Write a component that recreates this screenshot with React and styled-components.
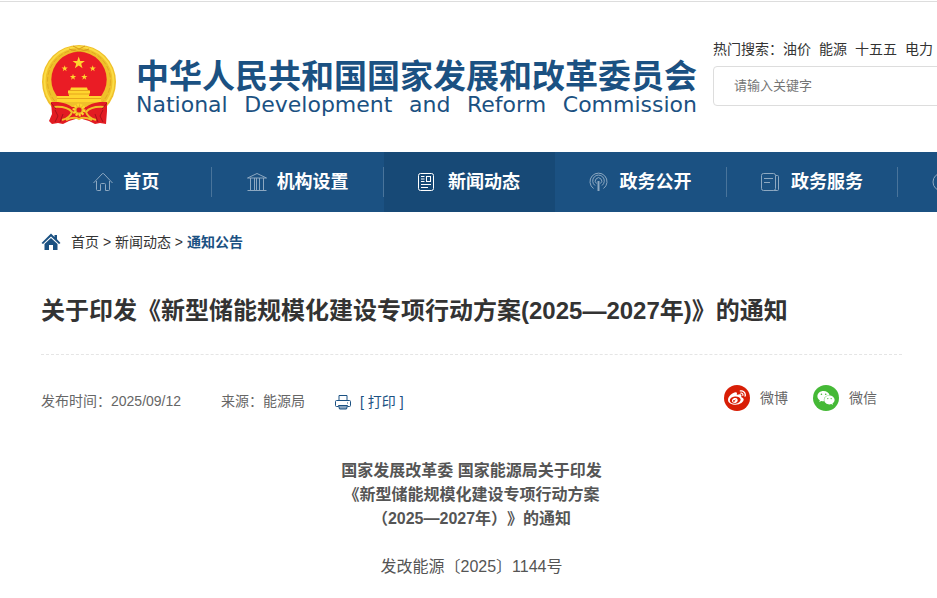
import styled, { createGlobalStyle } from 'styled-components';
import { FaWeibo, FaWeixin } from 'react-icons/fa';

const hotWords = ['油价', '能源', '十五五', '电力'];

const menu = [
  { label: '首页', icon: <HomeLine /> },
  { label: '机构设置', icon: <Institution /> },
  { label: '新闻动态', icon: <News />, active: true },
  { label: '政务公开', icon: <Broadcast /> },
  { label: '政务服务', icon: <Book /> },
];

export default function App() {
  return (
    <>
      <GlobalStyle />
      <Page>
        <Header>
          <Logo href="#">
            <Emblem />
            <div>
              <LogoTitle>中华人民共和国国家发展和改革委员会</LogoTitle>
              <LogoSubtitle>
                National Development and Reform Commission
              </LogoSubtitle>
            </div>
          </Logo>
          <Search>
            <HotWords>
              <span>热门搜索：</span>
              {hotWords.map((word) => (
                <a href="#" key={word}>
                  {word}
                </a>
              ))}
            </HotWords>
            <SearchInput
              type="text"
              placeholder="请输入关键字"
              aria-label="请输入关键字"
            />
          </Search>
        </Header>

        <Nav>
          <Menu>
            {menu.map((item) => (
              <MenuItem key={item.label} $active={item.active}>
                <MenuLink href="#">
                  {item.icon}
                  {item.label}
                </MenuLink>
              </MenuItem>
            ))}
            <MenuItem>
              <MenuLink href="#" $start>
                <Chat />
              </MenuLink>
            </MenuItem>
          </Menu>
        </Nav>

        <Main>
          <Breadcrumb>
            <HomeSolid />
            <div>
              <a href="#">首页</a> &gt; <a href="#">新闻动态</a> &gt;{' '}
              <Current href="#">通知公告</Current>
            </div>
          </Breadcrumb>

          <Title>
            关于印发《新型储能规模化建设专项行动方案(2025—2027年)》的通知
          </Title>

          <Meta>
            <MetaText>发布时间：2025/09/12</MetaText>
            <MetaText>来源：能源局</MetaText>
            <PrintButton type="button">
              <Printer />[ 打印 ]
            </PrintButton>
            <Share>
              <ShareLink href="#">
                <Round $color="#d81e06">
                  <FaWeibo size={18} />
                </Round>
                微博
              </ShareLink>
              <ShareLink href="#">
                <Round $color="#45b936">
                  <FaWeixin size={18} />
                </Round>
                微信
              </ShareLink>
            </Share>
          </Meta>

          <Article>
            <strong>
              国家发展改革委 国家能源局关于印发
              <br />
              《新型储能规模化建设专项行动方案
              <br />
              （2025—2027年）》的通知
            </strong>
            <p>发改能源〔2025〕1144号</p>
          </Article>
        </Main>
      </Page>
    </>
  );
}

function starPoints(cx, cy, r) {
  return Array.from({ length: 10 }, (_, i) => {
    const radius = i % 2 ? r * 0.4 : r;
    const angle = (Math.PI / 5) * i - Math.PI / 2;
    return `${cx + radius * Math.cos(angle)},${cy + radius * Math.sin(angle)}`;
  }).join(' ');
}

function Emblem() {
  return (
    <svg width="76" height="82" viewBox="0 0 76 82" aria-hidden="true">
      <circle cx="37" cy="37" r="37" fill="#f0c02a" />
      <circle
        cx="37"
        cy="36"
        r="31.5"
        fill="none"
        stroke="#dfab22"
        strokeWidth="1"
        strokeDasharray="5 2"
      />
      <circle
        cx="37"
        cy="36.5"
        r="34.5"
        fill="none"
        stroke="#fbdc45"
        strokeWidth="2"
      />
      <path d="M27 4l10 3 10-3M31 1l6 3 6-3" stroke="#d99b1c" fill="none" />
      <circle cx="37" cy="34.5" r="27.7" fill="#ea1c25" />
      <g fill="#ffd52e">
        <polygon points={starPoints(36.7, 18, 6.5)} />
        <polygon points={starPoints(22.7, 23.5, 3.3)} />
        <polygon points={starPoints(50.7, 23.5, 3.3)} />
        <polygon points={starPoints(31, 32, 3.3)} />
        <polygon points={starPoints(42.3, 32, 3.3)} />
        <path d="M29 42.5h16l1 3h2v3H26v-3h2z" />
        <path d="M27 48h20v3h12v6H15v-6h12z" />
      </g>
      <path d="M27 45.5h20M26 49h22M15 53.5h44" stroke="#e6a51c" />
      <path
        d="M9 57h9q12 0 19 7q7-7 19-7h9v9l-1 13-6-1-5 1-6-3-10-3-10 3-6 3-5-1-6 1-3-3 3-7z"
        fill="#e21b22"
      />
      <path d="M16 57h42q-9 1-14 5h-14q-5-4-14-5z" fill="#f0c02a" />
      <path
        d="M12 62q13-1 18 5q-2 6-10 8M62 62q-13-1-18 5q2 6 10 8"
        fill="none"
        stroke="#f0c02a"
        strokeWidth="2"
      />
      <path
        d="M13 65l3 6-3 6M61 65l-3 6 3 6M21 69l-3 8M53 69l3 8M9 58l5 6M65 58l-5 6"
        stroke="#a7131a"
        fill="none"
      />
      <circle
        cx="37"
        cy="65"
        r="5"
        fill="#e6b326"
        stroke="#ffd52e"
        strokeWidth="3"
        strokeDasharray="2 1"
      />
      <circle cx="37" cy="65" r="2.5" fill="#e21b22" />
      <path
        d="M24 75q8-4 13-1q5-3 13 1"
        fill="none"
        stroke="#f0c02a"
        strokeWidth="2"
      />
    </svg>
  );
}

function HomeLine() {
  return (
    <MenuIcon viewBox="0 0 20 20" aria-hidden="true">
      <path d="M.5 11 9.2 1.8q.8-.8 1.6 0L19.5 11M3.5 9v8.5q0 1 1 1h3v-6q0-1 1-1h3q1 0 1 1v6h3q1 0 1-1V9" />
    </MenuIcon>
  );
}

function Institution() {
  return (
    <MenuIcon viewBox="0 0 20 20" aria-hidden="true">
      <path d="M.5 6 10 1.5 19.5 6zM3.5 6v12M7.5 6v12M9.5 6v12M12.5 6v12M16.5 6v12M.5 18.5h19" />
    </MenuIcon>
  );
}

function News() {
  return (
    <MenuIcon viewBox="0 0 20 20" aria-hidden="true" $bright>
      <rect x=".5" y="1.5" width="15" height="17" rx="2" />
      <rect x="8.5" y="4.5" width="4" height="5" />
      <path d="M3 4.5h3.5M3 7h3.5M3 9.5h3.5M3 12.5h10M3 15.5h7" />
    </MenuIcon>
  );
}

function Broadcast() {
  return (
    <MenuIcon viewBox="0 0 20 20" aria-hidden="true">
      <path d="M4.5 16.5a8.5 8.5 0 1 1 10 0M6 13.5a5.8 5.8 0 1 1 7 0M7.5 11.5a3.2 3.2 0 1 1 4 0" />
      <path d="M9.5 9v10" strokeWidth="2" />
    </MenuIcon>
  );
}

function Book() {
  return (
    <MenuIcon viewBox="0 0 20 20" aria-hidden="true">
      <rect x=".5" y="1.5" width="14" height="17" rx="2" />
      <path d="M14.5 3.5h2q1 0 1 1v13q0 1-1 1h-4M3 6.5h9M3 10.5h6" />
    </MenuIcon>
  );
}

function Chat() {
  return (
    <MenuIcon viewBox="0 0 20 20" aria-hidden="true">
      <circle cx="10" cy="10" r="9" />
    </MenuIcon>
  );
}

function HomeSolid() {
  return (
    <svg width="20" height="18" viewBox="0 0 20 18" aria-hidden="true">
      <path
        d="M10 .5 13.5 4V2H16v4.2L19.5 10 18 11 10 3.5 2 11 .5 10z"
        fill="#1b5182"
      />
      <path d="M10 5l6.5 6v6H12v-5H8v5H3.5v-6z" fill="#1b5182" />
    </svg>
  );
}

function Printer() {
  return (
    <svg
      width="16"
      height="16"
      viewBox="0 0 16 16"
      fill="none"
      stroke="#1b5182"
      aria-hidden="true"
    >
      <path d="M4 6.5V1.5h8v5M3.5 12.5h-2q-1 0-1-1v-4q0-1 1-1h13q1 0 1 1v4q0 1-1 1h-2M12 9h1" />
      <path d="M3.5 11.5h9l-1 3.5h-7z" fill="#8aa5bf" />
    </svg>
  );
}

const GlobalStyle = createGlobalStyle`
  * {
    box-sizing: border-box;
  }
  body {
    margin: 0;
    background: #fff;
    color: #333;
    font: 14px/20px 'Liberation Sans', 'Noto Sans CJK SC', sans-serif;
  }
  a {
    color: inherit;
    text-decoration: none;
  }
  svg {
    flex: none;
  }
`;

const Page = styled.div`
  overflow: hidden;
  border-top: 1px solid #fff;
`;

const Header = styled.header`
  display: flex;
  gap: 16px;
  padding: 37px 0 25px 42px;
  border-top: 1px solid #ddd;
`;

const Logo = styled.a`
  display: flex;
  flex: none;
  gap: 18px;
  padding-top: 6px;
  color: #1b5182;
  white-space: nowrap;
`;

const LogoTitle = styled.div`
  padding-top: 15px;
  font-size: 33px;
  font-weight: 700;
  line-height: 34px;
`;

const LogoSubtitle = styled.div`
  font-family: 'DejaVu Sans', sans-serif;
  font-size: 22px;
  line-height: 22px;
  text-align-last: justify;
`;

const Search = styled.form`
  flex: 1 0 320px;
`;

const HotWords = styled.div`
  display: flex;
  gap: 8px;
  margin-bottom: 7px;

  span {
    margin-right: -8px;
  }
`;

const SearchInput = styled.input`
  width: 100%;
  height: 40px;
  padding: 0 20px 2px;
  border: 1px solid #ddd;
  border-radius: 4px;
  font: inherit;
  font-size: 13px;

  &::placeholder {
    color: #757575;
  }
`;

const Nav = styled.nav`
  padding-left: 41px;
  background: #1b5182;
`;

const Menu = styled.ul`
  display: grid;
  grid-template-columns: repeat(7, 1fr);
  min-width: 1200px;
  margin: 0;
  padding: 0;
  list-style: none;
`;

const MenuItem = styled.li`
  padding: 15px 0;
  background: ${({ $active }) => ($active ? '#174976' : 'none')};

  &:nth-child(3) > a,
  &:nth-child(6) > a {
    border-color: transparent;
  }
`;

const MenuLink = styled.a`
  display: flex;
  align-items: center;
  justify-content: ${({ $start }) => ($start ? 'flex-start' : 'center')};
  gap: 10px;
  height: 30px;
  padding-left: ${({ $start }) => ($start ? '34px' : '0')};
  border-right: 1px solid #49749b;
  color: #fff;
  font-size: 18px;
  font-weight: 700;
`;

const MenuIcon = styled.svg`
  width: 20px;
  height: 20px;
  fill: none;
  stroke: ${({ $bright }) => ($bright ? '#fff' : '#8da8c1')};
`;

const Main = styled.main`
  padding: 20px 35px 20px 41px;
`;

const Breadcrumb = styled.div`
  display: flex;
  align-items: center;
  gap: 10px;
`;

const Current = styled.a`
  color: #1b5182;
  font-weight: 700;
`;

const Title = styled.h1`
  margin: 41px 0 29px;
  padding-bottom: 25px;
  border-bottom: 1px dashed #e5e5e5;
  font-size: 24px;
  line-height: 36px;
`;

const Meta = styled.div`
  display: flex;
  align-items: center;
  color: #666;
`;

const MetaText = styled.span`
  margin: 6px 40px 0 0;

  & + & {
    margin-right: 30px;
  }
`;

const PrintButton = styled.button`
  display: flex;
  align-items: center;
  gap: 9px;
  margin: 8px 0 0;
  padding: 0;
  border: 0;
  background: none;
  color: #1b5182;
  font: inherit;
`;

const Share = styled.div`
  display: flex;
  gap: 25px;
  margin-left: auto;
  padding-right: 25px;
`;

const ShareLink = styled.a`
  display: flex;
  align-items: center;
  gap: 10px;
`;

const Round = styled.span`
  display: flex;
  align-items: center;
  justify-content: center;
  width: 26px;
  height: 26px;
  border-radius: 50%;
  background: ${({ $color }) => $color};
  color: #fff;
`;

const Article = styled.article`
  margin-top: 47px;
  color: #555;
  font-size: 16px;
  line-height: 24px;
  text-align: center;
  text-spacing-trim: space-all;

  p {
    margin: 24px 0 0;
  }
`;
